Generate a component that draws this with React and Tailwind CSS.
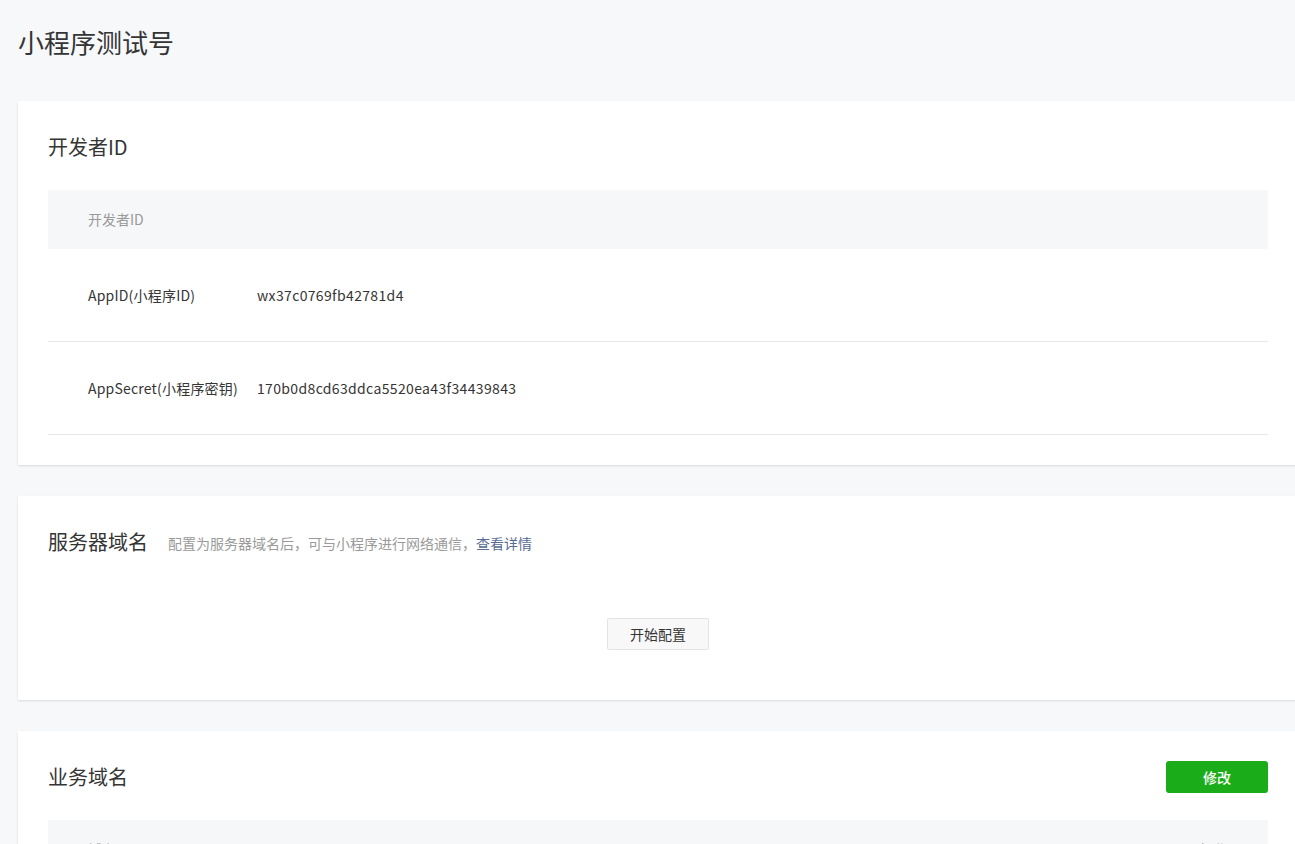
import React from "react";

const font = { fontFamily: '"Noto Sans CJK SC", "Noto Sans", sans-serif' };

const Card = ({ children, className = "" }) => (
  <div
    className={`w-[1280px] bg-white px-[30px] pt-[30px] shadow-[0_1px_2px_rgba(0,0,0,0.12)] ${className}`}
  >
    {children}
  </div>
);

const devRows = [
  { label: "AppID(小程序ID)", value: "wx37c0769fb42781d4" },
  { label: "AppSecret(小程序密钥)", value: "170b0d8cd63ddca5520ea43f34439843" },
];

export default function App() {
  return (
    <div
      className="min-h-screen w-full overflow-hidden bg-[#f7f8fa] text-[#353535]"
      style={font}
    >
      <div className="px-[18px]">
        {/* PAGE TITLE */}
        <h1 className="flex h-[84px] items-center text-[26px] font-normal leading-none">
          小程序测试号
        </h1>

        <div className="mt-[17px] flex flex-col gap-[31px]">
          {/* DEVELOPER ID */}
          <Card className="pb-[30px]">
            <h2 className="h-[32px] text-[20px] leading-[32px]">开发者ID</h2>
            <div className="mt-[27px] w-[1220px]">
              <div className="flex h-[59px] items-center bg-[#f6f7f9] pl-[40px] text-[14px] text-[#9a9a9a]">
                开发者ID
              </div>
              {devRows.map((row) => (
                <div
                  key={row.label}
                  className="flex h-[93px] items-center border-b border-[#e7e7eb] pl-[40px] text-[14px]"
                >
                  <span className="w-[169px] tracking-[0.2px]">{row.label}</span>
                  <span className="tracking-[0.35px]">{row.value}</span>
                </div>
              ))}
            </div>
          </Card>

          {/* SERVER DOMAIN */}
          <Card className="pb-[50px]">
            <div className="flex h-[32px] items-center">
              <h2 className="text-[20px] leading-[32px]">服务器域名</h2>
              <p className="ml-[20px] pt-[2px] text-[14px] text-[#9a9a9a]">
                配置为服务器域名后，可与小程序进行网络通信，
                <span className="text-[#576b95]">查看详情</span>
              </p>
            </div>
            <div className="mt-[60px] flex w-[1220px] justify-center">
              <button className="h-[32px] w-[102px] rounded-[2px] border border-[#e4e4e4] bg-[#f8f8f8] text-[14px] text-[#353535]">
                开始配置
              </button>
            </div>
          </Card>

          {/* BUSINESS DOMAIN */}
          <Card className="pb-[30px]">
            <div className="flex h-[32px] w-[1220px] items-center justify-between">
              <h2 className="text-[20px] leading-[32px]">业务域名</h2>
              <button className="h-[32px] w-[102px] rounded-[3px] bg-[#1aad19] text-[14px] font-medium text-white">
                修改
              </button>
            </div>
            <div className="mt-[27px] w-[1220px]">
              <div className="flex h-[59px] items-center justify-between bg-[#f6f7f9] pl-[40px] pr-[40px] text-[14px] text-[#9a9a9a]">
                <span>域名</span>
                <span>操作</span>
              </div>
            </div>
          </Card>
        </div>
      </div>
    </div>
  );
}
